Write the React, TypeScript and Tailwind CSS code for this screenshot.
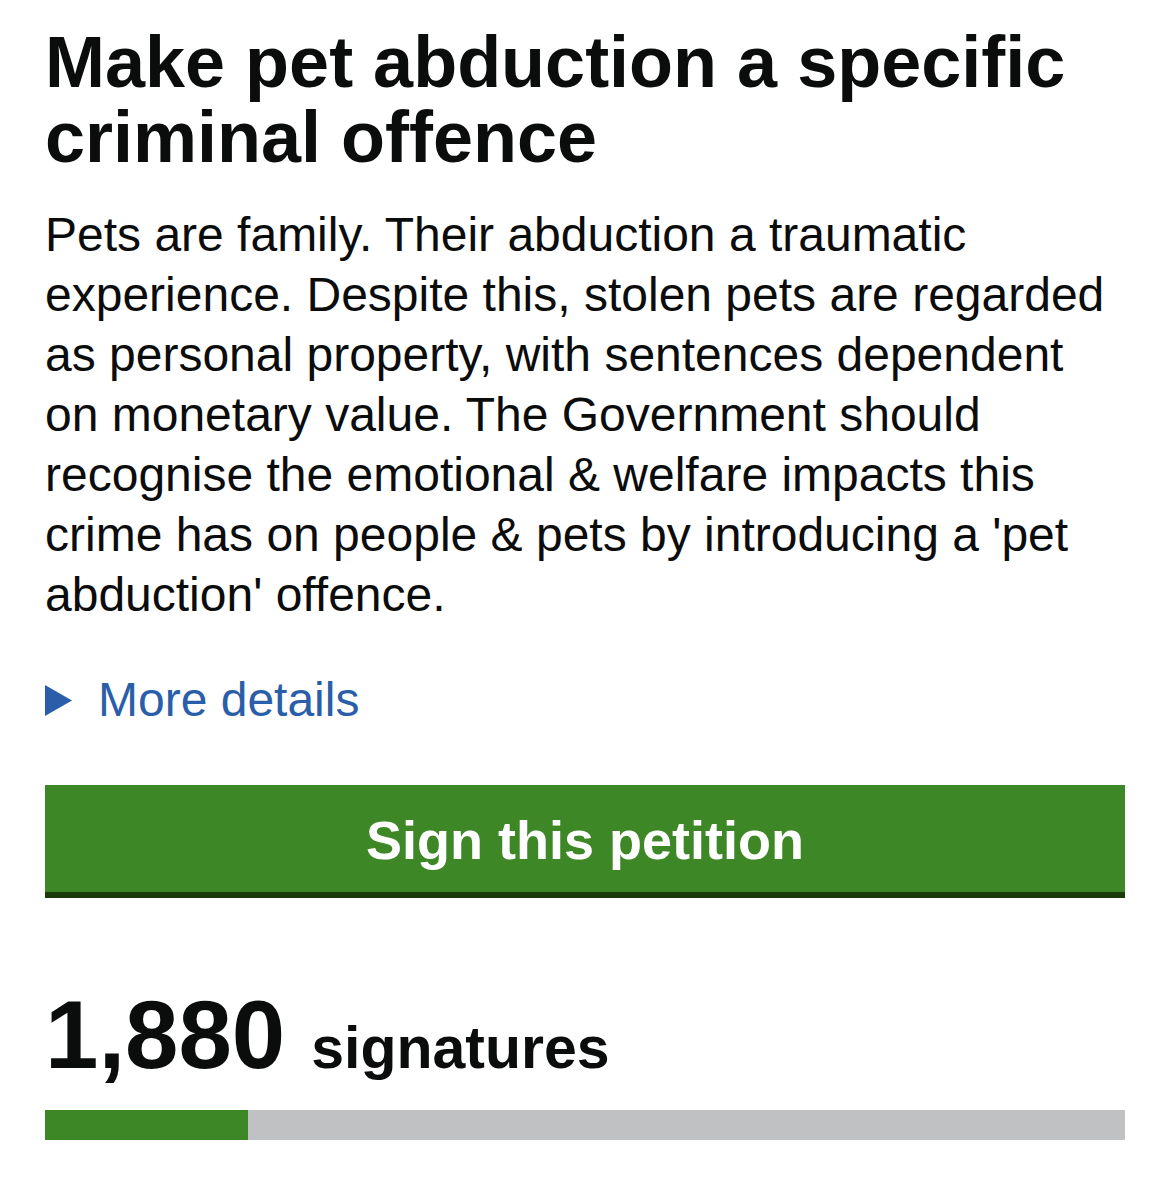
import React from "react";

export default function App() {
  const font = { fontFamily: '"Liberation Sans", Arial, Helvetica, sans-serif' };
  return (
    <div className="min-h-[1189px] w-full bg-white text-[#0b0c0c]" style={font}>
      <div className="pl-[45px] pr-[44px] pt-[25px]">
        <h1 className="text-[72px] font-bold leading-[75px] tracking-[0px]">
          Make pet abduction a specific criminal offence
        </h1>
        <p className="mt-[30px] text-[48px] leading-[60px]">
          Pets are family. Their abduction a traumatic experience. Despite this, stolen pets are regarded as personal
          property, with sentences dependent on monetary value. The Government should recognise the emotional &amp;
          welfare impacts this crime has on people &amp; pets by introducing a 'pet abduction' offence.
        </p>
        <div className="mt-[45px] flex h-[60px] items-center text-[48px] leading-[60px] text-[#2a5ea8]">
          <svg width="27" height="31" viewBox="0 0 27 31" className="mr-[26px] shrink-0">
            <polygon points="0,0 27,15.5 0,31" fill="#2a5ea8" />
          </svg>
          <span>More details</span>
        </div>
        <button className="mt-[55px] flex h-[113px] w-full items-center justify-center border-b-[6px] border-[#1d3a0d] bg-[#3e8726] pt-[3px] text-[54px] font-bold leading-[60px] text-white">
          Sign this petition
        </button>
        <div className="mt-[84px] flex items-baseline">
          <span className="text-[96px] font-bold leading-[105px]">1,880</span>
          <span className="ml-[26px] text-[59px] font-bold leading-[60px]">signatures</span>
        </div>
        <div className="mt-[23px] flex h-[30px] w-full bg-[#bfc1c3]">
          <div className="h-full bg-[#3e8726]" style={{ width: "18.8%" }} />
        </div>
      </div>
    </div>
  );
}
